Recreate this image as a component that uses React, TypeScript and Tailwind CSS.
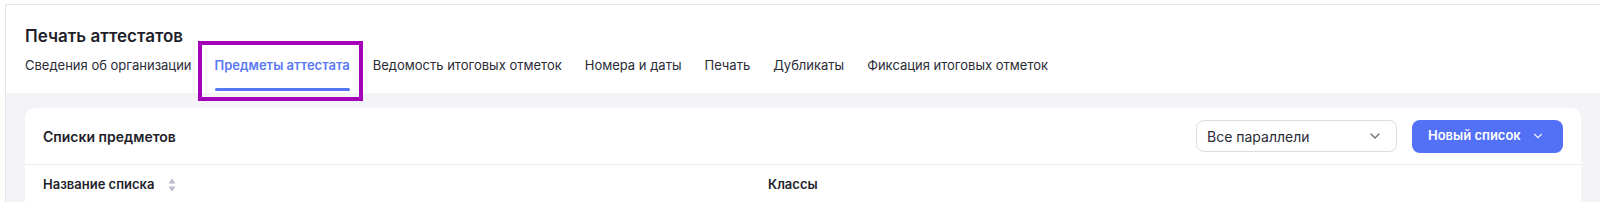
import { ChevronDown } from 'lucide-react'

const tabs = [
  'Сведения об организации',
  'Предметы аттестата',
  'Ведомость итоговых отметок',
  'Номера и даты',
  'Печать',
  'Дубликаты',
  'Фиксация итоговых отметок',
]

function SortIcon() {
  return (
    <svg width="8" height="14" viewBox="0 0 8 14" className="shrink-0">
      <path d="M4 0.5 L7.5 5.5 H0.5 Z" fill="#b9bcc8" />
      <path d="M4 13.5 L7.5 8.5 H0.5 Z" fill="#b9bcc8" />
    </svg>
  )
}

export default function App() {
  const active = 1

  return (
    <div
      className="relative h-[202px] w-[1600px] overflow-hidden bg-white pl-[5px] pt-[4px]"
      style={{ fontFamily: 'Inter, "Noto Sans", sans-serif' }}
    >
      <div className="flex h-full flex-col border-l border-t border-[#e4e4eb] bg-[#f4f4f8]">
        {/* Page header */}
        <div className="bg-white px-[19px] pt-[19px]">
          <h1 className="text-[17px] font-semibold leading-6 text-[#1f1f2b]">Печать аттестатов</h1>
          <div className="mt-[7px] flex gap-[23px]">
            {tabs.map((t, i) => (
              <div key={t} className="flex flex-col">
                <span
                  className={
                    'text-[13px] leading-5 whitespace-nowrap ' +
                    (i === active ? 'font-semibold text-[#5b79f3]' : 'text-[#2b2b36]')
                  }
                >
                  {t}
                </span>
                <div
                  className={
                    'mt-[13px] h-[3px] rounded-full ' + (i === active ? 'bg-[#5676f5]' : 'bg-transparent')
                  }
                />
              </div>
            ))}
          </div>
          <div className="h-[2px]" />
        </div>

        {/* Content */}
        <div className="px-[19px] pt-[15px]">
          <div className="rounded-t-[10px] bg-white">
            <div className="flex h-[57px] items-center justify-between border-b border-[#ececf1] pl-[18px] pr-[18px]">
              <span className="text-[14px] font-semibold text-[#1f1f2b]">Списки предметов</span>
              <div className="flex items-center gap-[15px]">
                <button className="flex h-[32px] w-[201px] items-center justify-between rounded-[8px] border border-[#dcdce4] bg-white pl-[10px] pr-[13px] text-[14px] text-[#2b2b36]">
                  <span>Все параллели</span>
                  <ChevronDown className="h-[16px] w-[16px] text-[#6b6e7c]" strokeWidth={2} />
                </button>
                <button className="flex h-[33px] w-[151px] items-center gap-[10px] rounded-[8px] bg-[#5271f6] pl-[16px] text-[13px] font-semibold text-white">
                  <span>Новый список</span>
                  <ChevronDown className="h-[14px] w-[14px] opacity-90" strokeWidth={2} />
                </button>
              </div>
            </div>
            <div className="flex h-[40px] items-center pl-[18px]">
              <div className="flex w-[725px] items-center gap-[14px]">
                <span className="text-[13px] font-semibold text-[#1f1f2b]">Название списка</span>
                <SortIcon />
              </div>
              <span className="text-[13px] font-semibold text-[#1f1f2b]">Классы</span>
            </div>
          </div>
        </div>
      </div>

      {/* Highlight annotation */}
      <div className="pointer-events-none absolute left-[198px] top-[41px] h-[60px] w-[165px] border-[4px] border-[#a300b8]" />
    </div>
  )
}
